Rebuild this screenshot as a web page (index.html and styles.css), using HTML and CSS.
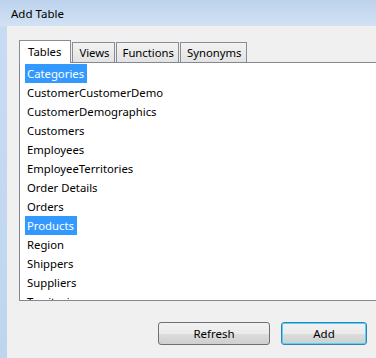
FILE: index.html
```html
<!DOCTYPE html>
<html>
<head>
  <title>Add Table</title>
  <link rel="stylesheet" href="styles.css">
</head>
<body>
  <div class="window">
    <div class="titlebar">Add Table</div>
    <div class="frame">
      <div class="frame-left"></div>
      <div class="client">
        <div class="tabs">
          <div class="tab active">Tables</div>
          <div class="tab">Views</div>
          <div class="tab">Functions</div>
          <div class="tab">Synonyms</div>
        </div>
        <ul class="table-list">
          <li><span class="sel">Categories</span></li>
          <li><span>CustomerCustomerDemo</span></li>
          <li><span>CustomerDemographics</span></li>
          <li><span>Customers</span></li>
          <li><span>Employees</span></li>
          <li><span>EmployeeTerritories</span></li>
          <li><span>Order Details</span></li>
          <li><span>Orders</span></li>
          <li><span class="sel">Products</span></li>
          <li><span>Region</span></li>
          <li><span>Shippers</span></li>
          <li><span>Suppliers</span></li>
          <li><span>Territories</span></li>
        </ul>
        <div class="buttons">
          <button class="btn refresh">Refresh</button>
          <button class="btn add">Add</button>
        </div>
      </div>
    </div>
  </div>
</body>
</html>
```

FILE: styles.css
```css
body {
  margin: 0;
  font-family: "Noto Sans", "Open Sans", sans-serif;
  font-size: 11.3px;
  color: #000;
}

.window {
  width: 376px;
  height: 358px;
  display: flex;
  flex-direction: column;
  overflow: hidden;
}

/* title bar */
.titlebar {
  height: 26px;
  line-height: 28px;
  padding-left: 11px;
  font-size: 11.5px;
  background: linear-gradient(#bcd2ec, #d2e2f4);
  flex-shrink: 0;
}

.frame {
  flex: 1;
  display: flex;
}

.frame-left {
  width: 7px;
  background: linear-gradient(#c8dbf2, #bfd5ef);
}

.client {
  flex: 1;
  background-color: #f0f0f0;
  padding: 13px 0 0 12px;
  overflow: hidden;
  display: flex;
  flex-direction: column;
}

/* tabs */
.tabs {
  display: flex;
  align-items: flex-end;
  height: 23px;
  position: relative;
  z-index: 1;
}

.tab {
  height: 19px;
  line-height: 20px;
  padding: 0 4px 0 6px;
  border: 1px solid #898c95;
  border-bottom: none;
  margin-right: 1px;
  background: linear-gradient(#f2f2f2, #e3e3e3);
  box-sizing: content-box;
}

.tab.active {
  height: 22px;
  line-height: 22px;
  background: #fff;
  margin-bottom: -1px;
  padding: 0 9px 0 8px;
}

/* list of tables */
.table-list {
  list-style: none;
  margin: 0;
  width: 400px;
  height: 236px;
  padding: 1px 0 0 5px;
  border: 1px solid #828790;
  background: #fff;
  overflow: hidden;
  flex-shrink: 0;
}

.table-list li {
  height: 19px;
  line-height: 19px;
}

.table-list span {
  display: inline-block;
  padding: 0 3px 0 2px;
}

.table-list .sel {
  background-color: #3399ff;
  color: #fff;
}

/* buttons */
.buttons {
  display: flex;
  justify-content: flex-end;
  gap: 11px;
  padding-right: 9px;
  margin-top: 21px;
}

.btn {
  font-family: inherit;
  font-size: 11.5px;
  height: 23px;
  border: 1px solid #707070;
  border-radius: 3px;
  background: linear-gradient(#f2f2f2 0%, #ebebeb 50%, #dddddd 51%, #cfcfcf 100%);
  padding: 0;
}

.refresh {
  width: 112px;
}

.add {
  width: 86px;
  border-color: #3c7fb1;
  box-shadow: inset 0 0 0 1px #48d8fb;
}
```
